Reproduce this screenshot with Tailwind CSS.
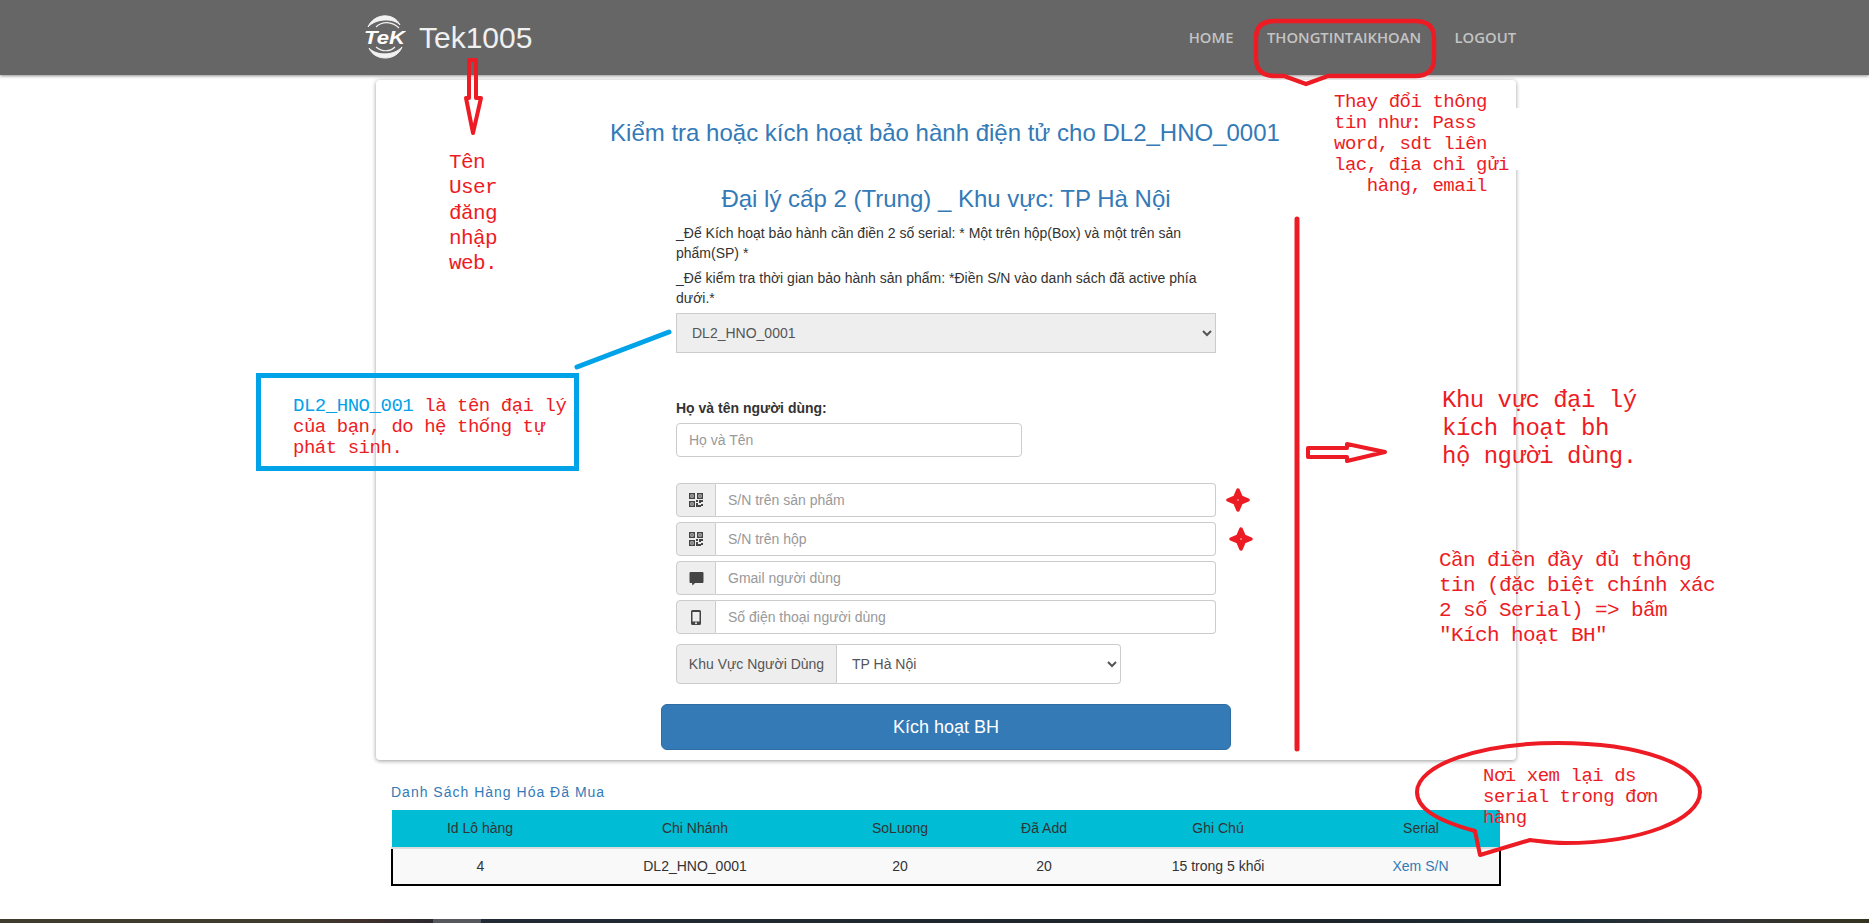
<!DOCTYPE html>
<html lang="en">
<head>
    <meta charset="UTF-8">
    <meta name="viewport" content="width=device-width, initial-scale=1.0">
    <title>Tek1005</title>
    <script src="https://cdn.jsdelivr.net/npm/@tailwindcss/browser@4"></script>
</head>
<body class="relative w-[1869px] h-[923px] overflow-hidden bg-white font-['Liberation_Sans',sans-serif] text-[14px] text-[#333]">

    <!-- navbar -->
    <header class="h-[75px] bg-[#666666] shadow-[0_1px_3px_rgba(0,0,0,0.45)] flex items-center pl-[364px] pr-[353px] justify-between relative z-10">
        <div class="flex items-center gap-[13px]">
            <svg width="42" height="46" viewBox="0 0 42 46" fill="none">
                <path d="M4 12C10 -2 30 -3 36 10C30 3 12 3 4 12Z" fill="#f2f2f2" stroke="#f2f2f2" stroke-width="1"/>
                <path d="M12 12C18 6 28 6 35 13" stroke="#f2f2f2" stroke-width="1.200"/>
                <path d="M5 33C12 41 30 41 38 32C33 46 11 47 5 33Z" fill="#f2f2f2" stroke="#f2f2f2" stroke-width="1"/>
                <path d="M12 32C18 37 26 37 31 32" stroke="#f2f2f2" stroke-width="1.200"/>
                <text x="0" y="29" font-family="Liberation Sans" font-size="19" font-weight="700" font-style="italic" fill="#ffffff" textLength="41" lengthAdjust="spacingAndGlyphs">TeK</text>
            </svg>
            <span class="text-[30px] leading-none text-[#f0f0f0]">Tek1005</span>
        </div>
        <nav class="flex gap-[33.500px] font-['Open_Sans',sans-serif] font-semibold text-[14.800px] text-[#c4c4c4]">
            <a>HOME</a>
            <a>THONGTINTAIKHOAN</a>
            <a>LOGOUT</a>
        </nav>
    </header>

    <main class="ml-[376px] w-[1140px]">
        <!-- form card -->
        <section class="mt-[5px] h-[680px] bg-white rounded-[4px] shadow-[0_1px_4px_rgba(0,0,0,0.4)]">
            <h2 class="pt-[36px] pr-[2px] text-center text-[24px] leading-[34px] text-[#337ab7]">Kiểm tra hoặc kích hoạt bảo hành điện tử cho DL2_HNO_0001</h2>
            <h2 class="mt-[32px] text-center text-[24px] leading-[34px] text-[#337ab7]">Đại lý cấp 2 (Trung) _ Khu vực: TP Hà Nội</h2>

            <div class="ml-[300px] w-[540px]">
                <p class="mt-[7px] text-[14px] leading-[20px]">_Để Kích hoạt bảo hành cần điền 2 số serial: * Một trên hộp(Box) và một trên sản phẩm(SP) *</p>
                <p class="mt-[5px] text-[14px] leading-[20px]">_Để kiểm tra thời gian bảo hành sản phẩm: *Điền S/N vào danh sách đã active phía dưới.*</p>

                <select class="mt-[5px] block w-full h-[40px] pl-[11px] pr-[2px] bg-[#eeeeee] border border-[#cccccc] text-[14px] text-[#555555]">
                    <option>DL2_HNO_0001</option>
                </select>

                <label class="block mt-[45px] text-[14px] leading-[20px] font-bold">Họ và tên người dùng:</label>
                <input type="text" placeholder="Họ và Tên" class="block mt-[5px] w-[346px] h-[34px] px-[12px] bg-white border border-[#cccccc] rounded-[4px] text-[14px] placeholder:text-[#999999]">

                <div class="mt-[26px] flex flex-col gap-[5px]">
                    <div class="flex h-[34px]">
                        <span class="w-[40px] flex items-center justify-center bg-[#eeeeee] border border-[#cccccc] rounded-l-[4px]">
                            <svg width="14" height="14" viewBox="0 0 14 14" fill="#444444"><path fill-rule="evenodd" d="M0 0h6v6H0zM1.500 1.500v3h3v-3zM8 0h6v6H8zM9.500 1.500v3h3v-3zM0 8h6v6H0zM1.500 9.500v3h3v-3zM2.200 2.200h1.600v1.600H2.200zM10.200 2.200h1.600v1.600h-1.600zM2.200 10.200h1.600v1.600H2.200zM7 7h2v2H7zM10 7h4v2h-2v1h-2zM7 10h2v2h3v2H7zM12 11h2v2h-2z"/></svg>
                        </span>
                        <input type="text" placeholder="S/N trên sản phẩm" class="flex-1 min-w-0 px-[12px] bg-white border border-l-0 border-[#cccccc] rounded-r-[4px] text-[14px] placeholder:text-[#999999]">
                    </div>
                    <div class="flex h-[34px]">
                        <span class="w-[40px] flex items-center justify-center bg-[#eeeeee] border border-[#cccccc] rounded-l-[4px]">
                            <svg width="14" height="14" viewBox="0 0 14 14" fill="#444444"><path fill-rule="evenodd" d="M0 0h6v6H0zM1.500 1.500v3h3v-3zM8 0h6v6H8zM9.500 1.500v3h3v-3zM0 8h6v6H0zM1.500 9.500v3h3v-3zM2.200 2.200h1.600v1.600H2.200zM10.200 2.200h1.600v1.600h-1.600zM2.200 10.200h1.600v1.600H2.200zM7 7h2v2H7zM10 7h4v2h-2v1h-2zM7 10h2v2h3v2H7zM12 11h2v2h-2z"/></svg>
                        </span>
                        <input type="text" placeholder="S/N trên hộp" class="flex-1 min-w-0 px-[12px] bg-white border border-l-0 border-[#cccccc] rounded-r-[4px] text-[14px] placeholder:text-[#999999]">
                    </div>
                    <div class="flex h-[34px]">
                        <span class="w-[40px] flex items-center justify-center bg-[#eeeeee] border border-[#cccccc] rounded-l-[4px]">
                            <svg width="15" height="15" viewBox="0 0 15 15" fill="#444444"><path d="M1.500 1h12a1 1 0 0 1 1 1v9a1 1 0 0 1-1 1H6l-2.500 2.500L3 12H1.500a1 1 0 0 1-1-1V2a1 1 0 0 1 1-1z"/></svg>
                        </span>
                        <input type="text" placeholder="Gmail người dùng" class="flex-1 min-w-0 px-[12px] bg-white border border-l-0 border-[#cccccc] rounded-r-[4px] text-[14px] placeholder:text-[#999999]">
                    </div>
                    <div class="flex h-[34px]">
                        <span class="w-[40px] flex items-center justify-center bg-[#eeeeee] border border-[#cccccc] rounded-l-[4px]">
                            <svg width="10" height="15" viewBox="0 0 10 15" fill="#444444"><path fill-rule="evenodd" d="M1.500 0h7A1.500 1.500 0 0 1 10 1.500v12A1.500 1.500 0 0 1 8.500 15h-7A1.500 1.500 0 0 1 0 13.500v-12A1.500 1.500 0 0 1 1.500 0zM1.500 2v9.500h7V2zM5 12.300a1 1 0 1 0 0 2 1 1 0 0 0 0-2z"/></svg>
                        </span>
                        <input type="text" placeholder="Số điện thoại người dùng" class="flex-1 min-w-0 px-[12px] bg-white border border-l-0 border-[#cccccc] rounded-r-[4px] text-[14px] placeholder:text-[#999999]">
                    </div>
                </div>

                <div class="mt-[10px] flex h-[40px] w-[445px]">
                    <span class="w-[161px] flex items-center justify-center bg-[#eeeeee] border border-[#cccccc] rounded-l-[4px] text-[#555555]">Khu Vực Người Dùng</span>
                    <select class="flex-1 min-w-0 pl-[11px] pr-[2px] bg-white border border-l-0 border-[#cccccc] rounded-r-[4px] text-[14px] text-[#555555]">
                        <option>TP Hà Nội</option>
                    </select>
                </div>

                <button class="block mt-[20px] -ml-[15px] w-[570px] h-[46px] bg-[#337ab7] border border-[#2e6da4] rounded-[6px] text-[18px] text-white">Kích hoạt BH</button>
            </div>
        </section>

        <!-- purchased goods -->
        <h3 class="mt-[22px] ml-[15px] text-[14px] leading-[20px] tracking-[1px] text-[#337ab7]">Danh Sách Hàng Hóa Đã Mua</h3>
        <table class="mt-[8px] ml-[15px] w-[1108px] table-fixed border-collapse text-[14px] text-center">
            <colgroup>
                <col class="w-[176px]"><col class="w-[254px]"><col class="w-[156px]"><col class="w-[132px]"><col class="w-[216px]"><col class="w-[174px]">
            </colgroup>
            <thead>
                <tr class="h-[38px] bg-[#00bcd4] border-b-2 border-[#dddddd]">
                    <th class="font-normal">Id Lô hàng</th>
                    <th class="font-normal">Chi Nhánh</th>
                    <th class="font-normal">SoLuong</th>
                    <th class="font-normal">Đã Add</th>
                    <th class="font-normal">Ghi Chú</th>
                    <th class="font-normal pl-[16px]">Serial</th>
                </tr>
            </thead>
            <tbody>
                <tr class="h-[37px] bg-[#f9f9f9] border-2 border-t-0 border-black">
                    <td>4</td>
                    <td>DL2_HNO_0001</td>
                    <td>20</td>
                    <td>20</td>
                    <td>15 trong 5 khối</td>
                    <td class="pl-[16px] text-[#337ab7]">Xem S/N</td>
                </tr>
            </tbody>
        </table>
    </main>

    <!-- window strip at the bottom of the capture -->
    <div class="absolute left-0 right-0 bottom-0 h-[4px] flex bg-[linear-gradient(90deg,#3f3c2e_0,#3f3c2e_300px,#40302c_360px,#2b2a30_433px,#212a35_481px,#1d2428_1300px,#1c2c36_1560px,#333333_1740px,#33331f_1869px)]">
        <div class="ml-[433px] w-[48px] bg-[#55585c]"></div>
    </div>

    <!-- card border is painted over here in the reference -->
    <div class="absolute z-10 left-[1510px] top-[108px] w-[12px] h-[62px] bg-white"></div>

    <!-- hand drawn annotations on top of the page -->
    <svg class="absolute left-0 top-0 z-20 pointer-events-none" width="1869" height="923" viewBox="0 0 1869 923" fill="none" stroke="#ed1c24" stroke-linejoin="round" stroke-linecap="round">
        <path d="M1275 21H1415C1428 21 1434 27 1434 38V58C1434 70 1428 76 1415 76H1328L1306 84L1284 76H1275C1262 76 1256 70 1256 58V38C1256 27 1262 21 1275 21Z" stroke-width="4.500"/>
        <path d="M469 60H476V98H481L473 133L466 98H469Z" stroke-width="4"/>
        <path d="M1308 448H1347V444L1385 452L1347 461V457H1308Z" stroke-width="4"/>
        <path d="M1297 219V749" stroke-width="5"/>
        <path d="M577 367L669 332" stroke="#00a2e8" stroke-width="5"/>
        <path d="M1475 831C1435 820 1417 808 1417 792C1417 765 1480 743 1558 743C1640 743 1700 765 1700 792C1700 820 1640 843 1565 843C1550 843 1540 841 1530 840L1480 855Z" stroke-width="4"/>
        <path d="M1238 490L1241 497L1248 500L1241 503L1238 510L1235 503L1228 500L1235 497Z" fill="#ed1c24" stroke-width="3.500"/>
        <circle cx="1238" cy="500" r="0.700" fill="#ffffff" stroke="none"/>
        <path d="M1241 529L1244 536L1251 539L1244 542L1241 549L1238 542L1231 539L1238 536Z" fill="#ed1c24" stroke-width="3.500"/>
        <circle cx="1241" cy="539" r="0.700" fill="#ffffff" stroke="none"/>
    </svg>

    <div class="absolute z-20 left-[1334px] top-[92px] whitespace-pre font-['Liberation_Mono',monospace] text-[19px] leading-[21px] tracking-[-0.470px] text-[#ed1c24]">Thay đổi thông
tin như: Pass
word, sdt liên
lạc, địa chỉ gửi
   hàng, email</div>
    <div class="absolute z-20 left-[449px] top-[150px] whitespace-pre font-['Liberation_Mono',monospace] text-[21px] leading-[25.300px] tracking-[-0.600px] text-[#ed1c24]">Tên
User
đăng
nhập
web.</div>
    <div class="absolute z-20 left-[1442px] top-[387px] whitespace-pre font-['Liberation_Mono',monospace] text-[24px] leading-[28px] tracking-[-0.500px] text-[#ed1c24]">Khu vực đại lý
kích hoạt bh
hộ người dùng.</div>
    <div class="absolute z-20 left-[1439px] top-[548px] whitespace-pre font-['Liberation_Mono',monospace] text-[21px] leading-[25px] tracking-[-0.600px] text-[#ed1c24]">Cần điền đầy đủ thông
tin (đặc biệt chính xác
2 số Serial) =&gt; bấm
"Kích hoạt BH"</div>
    <div class="absolute z-20 left-[1483px] top-[766px] whitespace-pre font-['Liberation_Mono',monospace] text-[19px] leading-[21px] tracking-[-0.470px] text-[#ed1c24]">Nơi xem lại ds
serial trong đơn
hàng</div>
    <div class="absolute z-20 left-[256px] top-[373px] w-[323px] h-[98px] border-[5px] border-[#00a2e8] pl-[32px] pt-[18px] whitespace-pre font-['Liberation_Mono',monospace] text-[19px] leading-[21px] tracking-[-0.470px] text-[#ed1c24]"><span class="text-[#00a2e8]">DL2_HNO_001</span> là tên đại lý
của bạn, do hệ thống tự
phát sinh.</div>

</body>
</html>
